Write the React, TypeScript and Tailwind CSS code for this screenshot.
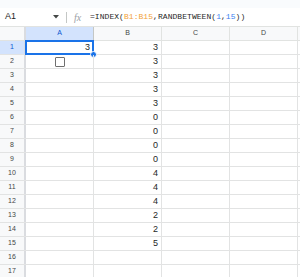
const values: (number | null)[] = [3, 3, 3, 3, 3, 0, 0, 0, 0, 4, 4, 4, 2, 2, 5, null, null];
const cols = ["A", "B", "C", "D"];

function FormulaBar() {
  return (
    <div className="flex h-[18px] items-center bg-white text-[9px] text-[#1f1f1f]">
      <div className="flex w-[62px] items-center justify-between pl-[5px] pr-[3px]">
        <span>A1</span>
        <svg width="6" height="4" viewBox="0 0 6 4">
          <path d="M0 0 L6 0 L3 3.5 Z" fill="#444746" />
        </svg>
      </div>
      <div className="mx-[4px] h-[11px] w-px bg-[#c4c7c5]" />
      <span className="ml-[3px] w-[16px] font-['Liberation_Serif',serif] text-[10px] italic text-[#9aa0a6]">fx</span>
      <span className="font-['Liberation_Mono',monospace] text-[8px] tracking-[0.05px]">
        =INDEX(<span className="text-[#f2a139]">B1:B15</span>,RANDBETWEEN(
        <span className="text-[#3c7ff0]">1</span>,<span className="text-[#3c7ff0]">15</span>))
      </span>
    </div>
  );
}

export default function App() {
  return (
    <div className="h-[277px] w-[300px] overflow-hidden bg-white font-['Liberation_Sans',Arial,sans-serif]">
      <div className="h-[8px] bg-[#f9fbfd]" />
      <FormulaBar />
      <div className="flex h-[15px] border-y border-[#e1e3e1] bg-[#f8f9fa] text-[7px] text-[#444746]">
        <div className="w-[26px] shrink-0 border-r-2 border-[#dadce0]" />
        {cols.map((c, i) => (
          <div
            key={c}
            className={
              i === 0
                ? "flex w-[68px] shrink-0 items-center justify-center border-r border-[#c4c7c5] bg-[#d3e3fd] text-[#0b57d0]"
                : "flex w-[68px] shrink-0 items-center justify-center border-r border-[#e1e3e1]"
            }
          >
            {c}
          </div>
        ))}
      </div>
      {values.map((v, r) => (
        <div key={r} className="flex h-[14px] border-b border-[#e2e3e3]">
          <div
            className={
              r === 0
                ? "flex w-[26px] shrink-0 items-center justify-center border-r-2 border-[#dadce0] bg-[#d3e3fd] text-[7px] text-[#0b57d0]"
                : "flex w-[26px] shrink-0 items-center justify-center border-r-2 border-[#dadce0] bg-[#f8f9fa] text-[7px] text-[#444746]"
            }
          >
            {r + 1}
          </div>
          <div className="relative flex w-[68px] shrink-0 items-center justify-center border-r border-[#e2e3e3] text-[9px]">
            {r === 0 && (
              <>
                <div className="absolute -left-px -top-px bottom-[-1px] right-[-1px] border-2 border-[#1a73e8]" />
                <span className="absolute right-[3px] text-[#1f1f1f]">3</span>
                <div className="absolute bottom-[-4px] right-[-4px] h-[7px] w-[7px] rounded-full border border-white bg-[#1a73e8]" />
              </>
            )}
            {r === 1 && <div className="h-[10px] w-[10px] rounded-[1px] border-[1.5px] border-[#6f6f6f]" />}
          </div>
          <div className="flex w-[68px] shrink-0 items-center justify-end border-r border-[#e2e3e3] pr-[3px] text-[9px] text-[#1f1f1f]">
            {v}
          </div>
          <div className="w-[68px] shrink-0 border-r border-[#e2e3e3]" />
          <div className="w-[68px] shrink-0 border-r border-[#e2e3e3]" />
        </div>
      ))}
    </div>
  );
}
